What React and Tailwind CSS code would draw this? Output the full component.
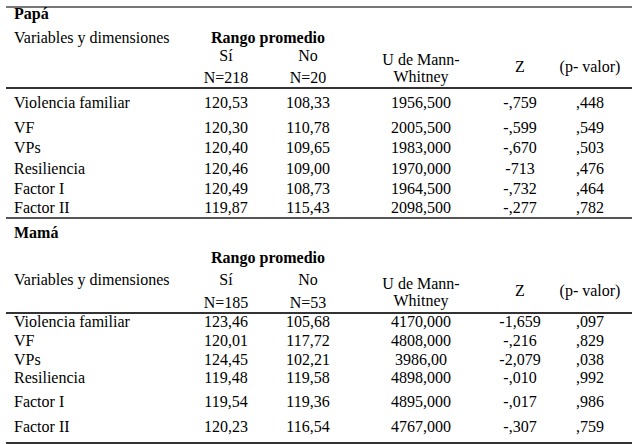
const COLS = "grid grid-cols-[180px_80px_84px_142px_56px_84px] items-center";
const SERIF = { fontFamily: "Liberation Serif" };

const PAPA = {
  title: "Papá",
  n: ["N=218", "N=20"],
  rows: [
    ["Violencia familiar", "120,53", "108,33", "1956,500", "-,759", ",448", "h-[28px]"],
    ["VF", "120,30", "110,78", "2005,500", "-,599", ",549", "h-[21px]"],
    ["VPs", "120,40", "109,65", "1983,000", "-,670", ",503", "h-[20px]"],
    ["Resiliencia", "120,46", "109,00", "1970,000", "-713", ",476", "h-[21px]"],
    ["Factor I", "120,49", "108,73", "1964,500", "-,732", ",464", "h-[20px]"],
    ["Factor II", "119,87", "115,43", "2098,500", "-,277", ",782", "h-[18px]"],
  ],
};

const MAMA = {
  title: "Mamá",
  n: ["N=185", "N=53"],
  rows: [
    ["Violencia familiar", "123,46", "105,68", "4170,000", "-1,659", ",097", "h-[16px]"],
    ["VF", "120,01", "117,72", "4808,000", "-,216", ",829", "h-[22px]"],
    ["VPs", "124,45", "102,21", "3986,00", "-2,079", ",038", "h-[12px]"],
    ["Resiliencia", "119,48", "119,58", "4898,000", "-,010", ",992", "h-[28px]"],
    ["Factor I", "119,54", "119,36", "4895,000", "-,017", ",986", "h-[20px]"],
    ["Factor II", "120,23", "116,54", "4767,000", "-,307", ",759", "h-[30px]"],
  ],
};

function Cell({ className = "", children }) {
  return <span className={`font-['Liberation_Serif'] ${className}`} style={SERIF}>{children}</span>;
}

function DataRows({ rows }) {
  return rows.map(([label, si, no, u, z, p, h]) => (
    <div key={label} className={`${COLS} ${h}`}>
      <Cell className="pl-2">{label}</Cell>
      <Cell className="text-center">{si}</Cell>
      <Cell className="text-center">{no}</Cell>
      <Cell className="text-center">{u}</Cell>
      <Cell className="text-center">{z}</Cell>
      <Cell className="text-center">{p}</Cell>
    </div>
  ));
}

function Header({ data, rows, labelRow }) {
  return (
    <div className={`grid grid-cols-[180px_80px_84px_142px_56px_84px] ${rows} items-center border-b-2 border-[#333]`}>
      <Cell className={`pl-2 col-start-1 ${labelRow}`}>Variables y dimensiones</Cell>
      <Cell className="col-start-2 col-span-2 row-start-1 text-center font-bold">Rango promedio</Cell>
      <Cell className="col-start-2 row-start-2 text-center">Sí</Cell>
      <Cell className="col-start-3 row-start-2 text-center">No</Cell>
      <Cell className="col-start-2 row-start-3 text-center pt-[4px]">{data.n[0]}</Cell>
      <Cell className="col-start-3 row-start-3 text-center pt-[4px]">{data.n[1]}</Cell>
      <Cell className="col-start-4 row-start-2 row-span-2 text-center leading-[17px] pt-[2px]">U de Mann-<br />Whitney</Cell>
      <Cell className="col-start-5 row-start-2 row-span-2 text-center">Z</Cell>
      <Cell className="col-start-6 row-start-2 row-span-2 text-center">(p- valor)</Cell>
    </div>
  );
}

export default function App() {
  return (
    <div className="w-[638px] h-[444px] bg-white text-black text-[16px] leading-none font-['Liberation_Serif']" style={SERIF}>
      <div className="ml-[6px] w-[626px] pt-[6px]">
        {/* Papá */}
        <div className="border-t-2 border-[#777]" />
        <div className="h-[12px] flex items-center pl-2"><Cell className="font-bold">{PAPA.title}</Cell></div>
        <div className="mt-[9px]">
          <Header data={PAPA} rows="grid-rows-[18px_18px_22px]" labelRow="row-start-1" />
        </div>
        <DataRows rows={PAPA.rows} />

        {/* Mamá */}
        <div className="border-t-2 border-[#555]" />
        <div className="h-[27px] flex items-center pl-2"><Cell className="font-bold">{MAMA.title}</Cell></div>
        <Header data={MAMA} rows="grid-rows-[24px_20px_22px]" labelRow="row-start-2" />
        <DataRows rows={MAMA.rows} />
        <div className="border-t-2 border-[#333]" />
      </div>
    </div>
  );
}
